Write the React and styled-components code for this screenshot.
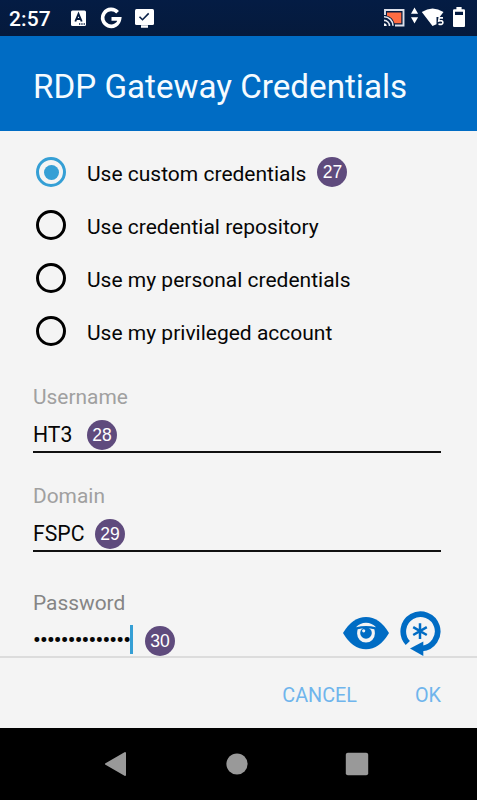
import React from "react";
import styled, { createGlobalStyle } from "styled-components";

const GlobalStyle = createGlobalStyle`
  * { box-sizing: border-box; }
  body { margin: 0; background: #f4f4f4; font-family: Roboto, "Liberation Sans", sans-serif; }
`;

const Screen = styled.div`
  display: flex;
  flex-direction: column;
  width: 477px;
  height: 800px;
  overflow: hidden;
  background: #f4f4f4;
  color: #060606;
`;

const StatusBar = styled.div`
  display: flex;
  align-items: center;
  flex: 0 0 36px;
  height: 36px;
  padding: 0 9px;
  background: linear-gradient(#041c44, #051a3c);
  color: #fff;
`;

const Clock = styled.span`
  width: 59px;
  font-size: 21px;
  font-weight: 500;
  letter-spacing: 0.1px;
  line-height: 34px;
  padding-top: 2px;
`;

const Glyph = styled.svg`
  display: block;
  flex: none;
  width: ${(p) => p.$w}px;
  height: ${(p) => p.$h}px;
  margin-left: ${(p) => p.$gap || 0}px;
`;

const StatusGroup = styled.div`
  display: flex;
  margin-left: ${(p) => (p.$end ? "auto" : "0")};
`;

const Header = styled.header`
  flex: 0 0 95px;
  padding: 31px 33px 0;
  background: #006cc4;
`;

const Title = styled.h1`
  margin: 0;
  font-size: 33.2px;
  font-weight: 400;
  line-height: 40px;
  letter-spacing: 0;
  white-space: nowrap;
  color: #f5fbff;
`;

const Form = styled.main`
  flex: 0 0 525px;
  padding: 14px 36px 0 33px;
`;

const RadioRow = styled.label`
  display: flex;
  height: 53px;
  padding: 12px 0 0 3px;
`;

const RadioMark = styled.span`
  display: flex;
  align-items: center;
  justify-content: center;
  width: 30px;
  height: 30px;
  margin-right: 21px;
  border: 3px solid ${(p) => (p.$on ? "#359fd5" : "#000")};
  border-radius: 50%;

  &::after {
    content: "";
    width: 15px;
    height: 15px;
    border-radius: 50%;
    background: ${(p) => (p.$on ? "#359fd5" : "transparent")};
  }
`;

const RadioText = styled.span`
  margin-top: 2px;
  font-size: 21px;
  line-height: 30px;
  white-space: nowrap;
`;

const Badge = styled.span`
  flex: none;
  width: 30px;
  height: 30px;
  margin-left: ${(p) => p.$gap}px;
  border-radius: 50%;
  background: #5f4b7d;
  color: #fff;
  font: 17.5px/30px "Liberation Sans", Arial, sans-serif;
  text-align: center;
`;

const Field = styled.div`
  height: ${(p) => p.$height}px;
  padding-top: 25px;
`;

const FieldLabel = styled.div`
  height: 38px;
  font-size: 20.9px;
  line-height: 30px;
  color: ${(p) => (p.$active ? "#858585" : "#a0a0a0")};
`;

const FieldValue = styled.div`
  display: flex;
  height: 33px;
  border-bottom: ${(p) => (p.$line ? "2px solid #111" : "none")};
  font-size: 21.2px;
  line-height: 30px;
`;

const Value = styled.span`
  width: ${(p) => p.$width}px;
  white-space: nowrap;
`;

const MaskedValue = styled(Value)`
  font-size: 22px;
  font-weight: 500;
  line-height: 30px;
  letter-spacing: ${(p) => p.$track}px;
`;

const Caret = styled.span`
  width: 3px;
  height: 29px;
  margin-top: -1px;
  background: #359fd5;
`;

const FieldIcons = styled.div`
  display: flex;
  margin: -17px -1px 0 auto;
`;

const Footer = styled.footer`
  display: flex;
  align-items: flex-start;
  justify-content: flex-end;
  flex: 0 0 72px;
  padding: 24px 36px 0 0;
  border-top: 2px solid #dcdcdc;
`;

const TextButton = styled.button`
  padding: 0;
  border: 0;
  margin-left: ${(p) => p.$gap || 0}px;
  background: none;
  color: #6fb5ec;
  font: 19.8px/28px Roboto, sans-serif;
`;

const NavBar = styled.nav`
  flex: 0 0 72px;
  display: flex;
  align-items: center;
  background: #000;
  padding-left: 104px;
`;

const options = [
  { label: "Use custom credentials", on: true, badge: "27" },
  { label: "Use credential repository" },
  { label: "Use my personal credentials" },
  { label: "Use my privileged account" },
];

function StatusIcons() {
  return (
    <StatusBar>
      <Clock>2:57</Clock>
      <StatusGroup>
        <Glyph $w={20} $h={36} $gap={0} viewBox="68 0 20 36">
          <rect x="71" y="10.5" width="15" height="15.5" rx="1.5" fill="#fff" />
          <path d="M75.3 21.5 78.5 14 81.7 21.5M76.5 19H80.5" fill="none" stroke="#061c40" strokeWidth="1.9" />
          <path d="M79 24h1.3M81.3 24h1.3M83.6 24h1.3" stroke="#061c40" strokeWidth="1.3" />
        </Glyph>
        <Glyph $w={24} $h={36} $gap={11} viewBox="99 0 24 36">
          <path d="M117.6 12.3A8.5 8.5 0 1 0 119.6 18.9H111.5" fill="none" stroke="#fff" strokeWidth="3.6" />
        </Glyph>
        <Glyph $w={20} $h={36} $gap={12} viewBox="135 0 20 36">
          <rect x="135" y="9" width="19" height="16" rx="1.5" fill="#fff" />
          <path d="M141 26h7M141 27.2h7" stroke="#fff" strokeWidth="1.3" />
          <path d="m139.5 16.7 3 3 6.2-6.3" fill="none" stroke="#0a2149" strokeWidth="1.6" />
        </Glyph>
      </StatusGroup>
      <StatusGroup $end>
        <Glyph $w={86} $h={36} viewBox="382 0 86 36">
          <path d="M385 15v-5h18.500v15.500H395" fill="none" stroke="#dde0ea" strokeWidth="1.9" />
          <path d="M387 12.5h14.3v10.7h-6.8q-2-6-7.5-7.4z" fill="#ff6c43" />
          <path d="M384 16.8a9 9 0 0 1 9 9M384 20.4a5.5 5.5 0 0 1 5.5 5.5" fill="none" stroke="#e6e8ef" strokeWidth="1.6" />
          <path d="M384 23.3a2.7 2.7 0 0 1 2.7 2.7H384z" fill="#fff" />
          <path d="m414.5 7.5 3.6 6.3H411zM411 17.3h7.1l-3.6 6.3z" fill="#fff" />
          <path d="M421.8 12q10.7-7.2 21.7 0l-3.8 5h-3.2v7.2l-4 1.8z" fill="#fff" />
          <path d="M443 17.900h-3.800l-.5 3.200q4.200-1.200 4.200 1.500 0 2.500-4.400 1.500" fill="none" stroke="#fff" strokeWidth="1.6" />
          <path fillRule="evenodd" d="M456.400 7h5.200v2.300h2.300q1.100 0 1.100 1.100v15.500q0 1.100-1.100 1.100h-9.800q-1.100 0-1.100-1.100V10.400q0-1.100 1.100-1.100h2.300zM455 11.800v3.200h8v-3.200z" fill="#fff" />
        </Glyph>
      </StatusGroup>
    </StatusBar>
  );
}

export default function App() {
  return (
    <Screen>
      <GlobalStyle />
      <StatusIcons />
      <Header>
        <Title>RDP Gateway Credentials</Title>
      </Header>
      <Form>
        {options.map((o) => (
          <RadioRow key={o.label}>
            <RadioMark $on={o.on} />
            <RadioText>{o.label}</RadioText>
            {o.badge && <Badge $gap={11}>{o.badge}</Badge>}
          </RadioRow>
        ))}
        <Field $height={99}>
          <FieldLabel>Username</FieldLabel>
          <FieldValue $line>
            <Value $width={54}>HT3</Value>
            <Badge $gap={0}>28</Badge>
          </FieldValue>
        </Field>
        <Field $height={107}>
          <FieldLabel>Domain</FieldLabel>
          <FieldValue $line>
            <Value $width={62}>FSPC</Value>
            <Badge $gap={0}>29</Badge>
          </FieldValue>
        </Field>
        <Field $height={93}>
          <FieldLabel $active>Password</FieldLabel>
          <FieldValue>
            <MaskedValue $width={97} $track={-0.75}>••••••••••••••</MaskedValue>
            <Caret />
            <Badge $gap={12}>30</Badge>
            <FieldIcons>
              <Glyph $w={48} $h={48} viewBox="342 609 48 48">
                <path d="M343 633q9.500-16 23-16t23 16q-9.500 16.300-23 16.300t-23-16.300z" fill="#006cc4" />
                <path d="M356 627.200q4-4.500 10-4.500t10 4.500q-10-2.400-20 0z" fill="#f4f4f4" />
                <path d="M357.700 629.300q8.300-2.300 16.600 0 .6 1.900.6 4.300a8.900 8.900 0 0 1-17.800 0q0-2.400.6-4.300z" fill="#f4f4f4" />
                <circle cx="366" cy="633" r="5.800" fill="#006cc4" />
                <circle cx="363.700" cy="630.800" r="1.600" fill="#f4f4f4" />
              </Glyph>
              <Glyph $w={44} $h={48} $gap={8} viewBox="398 609 44 48">
                <path d="M407.800 643A17.200 17.200 0 1 1 422 648.500" fill="none" stroke="#006cc4" strokeWidth="5.700" />
                <path d="m410 648.500 13.300-7v14.500z" fill="#006cc4" />
                <path d="M420 623.200v15.800M413.200 627.200l13.600 7.800M426.800 627.200l-13.600 7.800" stroke="#006cc4" strokeWidth="2.500" />
              </Glyph>
            </FieldIcons>
          </FieldValue>
        </Field>
      </Form>
      <Footer>
        <TextButton>CANCEL</TextButton>
        <TextButton $gap={58}>OK</TextButton>
      </Footer>
      <NavBar>
        <Glyph $w={270} $h={72} viewBox="104 728 270 72">
          <path d="M106 764 125 753v22z" fill="#999" stroke="#999" strokeWidth="2" strokeLinejoin="round" />
          <circle cx="237" cy="764" r="10.600" fill="#999" />
          <rect x="345.800" y="752.800" width="22.400" height="22.400" rx="2" fill="#999" />
        </Glyph>
      </NavBar>
    </Screen>
  );
}
